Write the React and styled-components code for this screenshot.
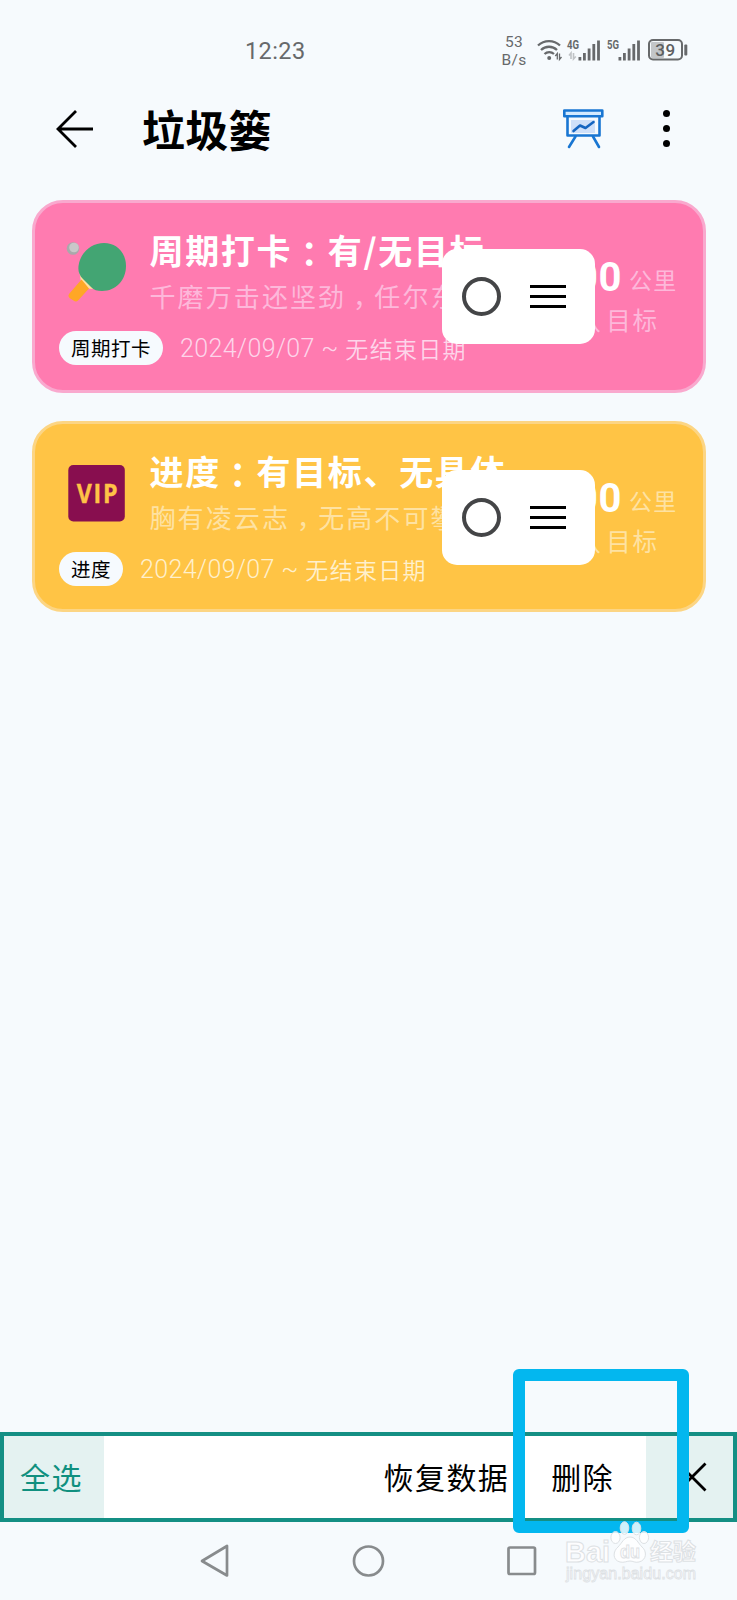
import styled, { createGlobalStyle } from "styled-components";

const GlobalStyle = createGlobalStyle`
  * {
    box-sizing: border-box;
  }

  body {
    margin: 0;
    background-color: #f6fafd;
    font-family: Roboto, "Noto Sans CJK SC", sans-serif;
  }

  svg {
    display: block;
    flex-shrink: 0;
    overflow: visible;
  }
`;

const Screen = styled.div`
  display: flex;
  flex-direction: column;
  height: 1600px;
  overflow: hidden;
  position: relative;
  width: 737px;
`;

const StatusBar = styled.div`
  align-items: center;
  color: #67696b;
  display: flex;
  height: 100px;
  padding: 0 49px 0 245px;
`;

const Clock = styled.span`
  font-size: 23.5px;
  letter-spacing: 0.4px;
  padding-top: 1px;
`;

const NetSpeed = styled.div`
  font-size: 15.5px;
  letter-spacing: 0.3px;
  line-height: 18px;
  margin: 0 10px 0 auto;
  padding-top: 2px;
  text-align: center;
`;

const StatusIcons = styled.div`
  align-items: center;
  display: flex;
  gap: 4.5px;

  > :last-child {
    margin-left: 2px;
  }
`;

const Header = styled.header`
  align-items: center;
  display: flex;
  height: 56px;
  padding: 1px 67px 0 56px;

  h1 {
    font-family: "Noto Sans CJK SC", sans-serif;
    font-size: 43px;
    font-weight: 700;
    letter-spacing: 0.3px;
    line-height: 55px;
    margin: 0 auto 1px 48px;
  }
`;

const MoreButton = styled.div`
  display: grid;
  gap: 8px;
  margin-left: 59px;

  i {
    background-color: #000;
    border-radius: 50%;
    height: 7px;
    width: 7px;
  }
`;

const CardList = styled.main`
  display: flex;
  flex: 1;
  flex-direction: column;
  gap: 28px;
  padding: 44px 31.5px 0;
`;

const Card = styled.article`
  background-color: ${({ $color }) => $color};
  border: 3px solid ${({ $border }) => $border};
  border-radius: 31px;
  color: #fff;
  height: ${({ $height }) => $height}px;
  padding: 24px 25px 0 24px;
  position: relative;
`;

const CardTop = styled.div`
  display: flex;
  height: 94px;
`;

const CardIcon = styled.div`
  margin: 14px 23px 0 8px;
`;

const CardText = styled.div`
  font-family: "Noto Sans CJK SC", sans-serif;
  white-space: nowrap;
  width: 360px;

  h2 {
    font-size: 34px;
    font-weight: 700;
    letter-spacing: 1.67px;
    line-height: 46px;
    margin: 0;
  }

  p {
    color: ${({ $muted }) => $muted};
    font-size: 26px;
    font-weight: 400;
    letter-spacing: 2.1px;
    line-height: 46px;
    margin: 0;
  }
`;

// the TC face centres punctuation in its cell, $drop lowers it to the line
const Punct = styled.span`
  display: inline-block;
  font-family: "Noto Sans CJK TC", sans-serif;
  line-height: 1;
  margin: -10px 0;
  transform: translateY(${({ $drop }) => $drop}em);
`;

const Stats = styled.div`
  align-items: flex-end;
  color: ${({ $muted }) => $muted};
  display: flex;
  flex-direction: column;
  margin-left: auto;
  white-space: nowrap;
`;

const Amount = styled.div`
  font-size: 23px;
  letter-spacing: 1.3px;
  line-height: 44px;
  margin-top: 31px;

  strong {
    color: #fff;
    font-size: 40px;
    font-weight: 700;
    letter-spacing: 0.5px;
    line-height: 40px;
    margin-right: 7px;
    vertical-align: -2px;
  }
`;

const Target = styled.div`
  font-size: 24.5px;
  letter-spacing: 1.6px;
  line-height: 36px;
  margin-right: 19px;

  span {
    margin-right: 4px;
  }
`;

const CardFooter = styled.div`
  align-items: center;
  display: flex;
  gap: 17px;
  height: 34px;
  margin-top: 10px;
`;

const Tag = styled.span`
  background-color: #f6fafe;
  border-radius: 17px;
  color: #000;
  font-family: "Noto Sans CJK SC", sans-serif;
  font-size: 19.5px;
  height: 34px;
  letter-spacing: 0.5px;
  line-height: 34px;
  padding: 0 12px 0 12.5px;
`;

const DateRange = styled.span`
  color: ${({ $color }) => $color};
  font-size: 23px;
  font-weight: 350;
  letter-spacing: 1.3px;
  line-height: 34px;
  padding-top: 3px;
  white-space: nowrap;

  span {
    font-size: 25px;
    font-weight: 300;
    letter-spacing: 0.4px;
    vertical-align: 1px;
  }
`;

const SelectPanel = styled.div`
  align-items: center;
  background-color: #fff;
  border-radius: 15px;
  display: flex;
  gap: 29px;
  height: 95px;
  left: 407.5px;
  padding-left: 20px;
  position: absolute;
  top: 46px;
  width: 153px;
`;

const Radio = styled.span`
  border: 4px solid #444547;
  border-radius: 50%;
  height: 39px;
  width: 39px;
`;

const DragHandle = styled.span`
  display: grid;
  gap: 7.4px;

  i {
    background-color: #000;
    height: 2.8px;
    width: 36px;
  }
`;

const ActionBar = styled.footer`
  align-items: stretch;
  background-color: #fff;
  border: 4px solid #148f84;
  display: flex;
  font-family: "Noto Sans CJK SC", sans-serif;
  font-size: 30px;
  height: 90px;
  letter-spacing: 1.4px;
  line-height: 80px;
  white-space: nowrap;
`;

const SelectAll = styled.div`
  background-color: #e4f2f1;
  color: #10907f;
  margin-right: auto;
  padding-left: 16px;
  width: 100px;
`;

const Action = styled.div`
  padding-right: ${({ $gap }) => $gap}px;
`;

const CloseButton = styled.div`
  align-items: center;
  background-color: #e4f2f1;
  display: flex;
  justify-content: center;
  padding-left: 4px;
  width: 87px;
`;

const SystemNav = styled.nav`
  align-items: center;
  display: flex;
  height: 78px;
  justify-content: space-between;
  padding: 0 200px;
`;

const Highlight = styled.div`
  border: 12px solid #03b7ef;
  border-radius: 6px;
  height: 164px;
  left: 513px;
  position: absolute;
  top: 1369px;
  width: 176px;
`;

const Watermark = styled.div`
  left: 564px;
  position: absolute;
  top: 1519px;
`;

const BackIcon = () => (
  <svg width="38" height="38" viewBox="0 0 38 38" fill="none" stroke="#000" strokeWidth="2.8">
    <path d="M20 1 2 19l18 18M2 19h35" />
  </svg>
);

const BoardIcon = () => (
  <svg width="41" height="39" viewBox="0 0 41 39" fill="none" stroke="#1976d2" strokeWidth="2.6" strokeLinecap="round" strokeLinejoin="round">
    <path d="M8 11h24v13H8z" fill="#cfe0f9" stroke="none" />
    <path d="M4.500 8v18.500h32V8" />
    <rect x="1.300" y="1.500" width="38" height="5.800" fill="#d3eaff" />
    <path d="m10.500 22 6.500-5.500 5.500 2.500 8-6" stroke="#1565c0" />
    <path d="M12.500 27.500 6 38M30 27.500l6 10.500" />
  </svg>
);

const WifiIcon = () => (
  <svg width="26" height="22" viewBox="0 0 26 22" fill="none" stroke="#67696b" strokeWidth="2.300">
    <path d="M1 6.500a16 16 0 0 1 22 0M4 11a11.500 11.500 0 0 1 16 0M7.500 15a7 7 0 0 1 9.500 0" />
    <circle cx="12.200" cy="19" r="2" fill="#67696b" stroke="none" />
    <path d="M20.300 20.500v-6l-2 2.500M22.500 14.500v6l2-2.500" strokeWidth="1.300" />
  </svg>
);

const Signal = ({ label, data }) => (
  <svg width="35" height="23" viewBox="0 0 35 23" fill="#67696b">
    <text x="0" y="10" fontSize="12.500" fontWeight="700" fontFamily="Roboto" textLength="12" lengthAdjust="spacingAndGlyphs">
      {label}
    </text>
    {data && <path d="M4 20v-6l-2 2.500M6.500 14v6l2.300-2.500" fill="none" stroke="#c0c3c6" strokeWidth="1.600" />}
    <path d="M11.500 18h2.800v3.500h-2.800zM16 14h2.800v7.500H16zM20.700 9.500h2.800v12h-2.800zM25.400 5h2.800v16.500h-2.800zM30.100 1.500h2.800v20h-2.800z" />
  </svg>
);

const BatteryIcon = () => (
  <svg width="40" height="22" viewBox="0 0 40 22">
    <rect x="3" y="3" width="13" height="16" rx="1" fill="#c3c6c9" />
    <rect x="1" y="1" width="33" height="19.500" rx="4" fill="none" stroke="#67696b" strokeWidth="2" />
    <rect x="36.300" y="5.500" width="3" height="11" rx="1" fill="#67696b" />
    <text x="17.500" y="16.800" textAnchor="middle" fontSize="17" fontWeight="500" letterSpacing="0.500" fontFamily="Roboto" fill="#5d5f61">
      39
    </text>
  </svg>
);

const PaddleIcon = () => (
  <svg width="60" height="62" viewBox="0 0 60 62">
    <circle cx="6" cy="7.500" r="6.300" fill="#a9a9ab" />
    <circle cx="7" cy="6.500" r="4.800" fill="#c9c8c9" />
    <path d="M12.500 32 28 48l-7.500-.500L14 40z" fill="#ffe0a0" />
    <path d="M2 53 14.500 38.500 22 47.500 11 59.500q-2 2-4.500 0L2.500 57q-2-2-.500-4z" fill="#ffa726" />
    <path d="M11.500 25C13 12 24 2 37 2s22 10 22 23c0 14-10 25-24 25-5 0-8-1-11-4l-8-8c-4-4-5-8-4.500-13z" fill="#43a573" />
  </svg>
);

const VipIcon = () => (
  <svg width="60" height="62" viewBox="0 0 60 62">
    <rect x="1.300" y="3" width="56.500" height="56.500" rx="5" fill="#880e4f" />
    <text transform="translate(31 41) scale(0.86 1)" textAnchor="middle" fontSize="27" fontWeight="700" letterSpacing="2" fontFamily="Open Sans, sans-serif" fill="#ffc247" stroke="#ffc247" strokeWidth="0.400">
      VIP
    </text>
  </svg>
);

const WatermarkLogo = () => (
  <svg width="136" height="70" viewBox="0 0 136 70" fill="#fff" fillOpacity="0.8" stroke="#dde1e4" strokeWidth="1">
    <ellipse cx="60.500" cy="9" rx="4.300" ry="6.300" />
    <ellipse cx="72.500" cy="9.500" rx="4.300" ry="6.300" />
    <ellipse cx="51.500" cy="18.500" rx="4.600" ry="6" />
    <ellipse cx="80" cy="18.500" rx="4.600" ry="6" />
    <path d="M66 18c6 0 8 6 12 10 5 4 5 13-3 15-4 1-6-1-9-1s-6 2-10 1c-8-2-7-11-2-15 4-4 6-10 12-10z" />
    <g fontFamily="Liberation Sans, Noto Sans CJK SC, sans-serif" fontWeight="700">
      <text x="1" y="43" fontSize="29" textLength="45" lengthAdjust="spacingAndGlyphs">Bai</text>
      <text x="56" y="39" fontSize="19" textLength="20" lengthAdjust="spacingAndGlyphs">du</text>
      <text x="86" y="41" fontSize="23" textLength="46">经验</text>
    </g>
    <text x="2" y="60" fontSize="16" fontFamily="Liberation Sans, sans-serif" textLength="130" strokeWidth="0.800">
      jingyan.baidu.com
    </text>
  </svg>
);

const cards = [
  {
    id: 1,
    color: "#ff7bb0",
    border: "#f9a9ce",
    muted: "#fdb8da",
    date: "#fdd5ea",
    height: 193,
    icon: <PaddleIcon />,
    title: ["周期打卡", "有/无目标"],
    note: ["千磨万击还坚劲", "任尔东西"],
    tag: "周期打卡",
  },
  {
    id: 2,
    color: "#ffc445",
    border: "#fcd584",
    muted: "#fee2a2",
    date: "#fff0cc",
    height: 191,
    icon: <VipIcon />,
    title: ["进度", "有目标、无具体"],
    note: ["胸有凌云志", "无高不可攀"],
    tag: "进度",
  },
];

const TrashCard = ({ card }) => (
  <Card $color={card.color} $border={card.border} $height={card.height}>
    <CardTop>
      <CardIcon>{card.icon}</CardIcon>
      <CardText $muted={card.muted}>
        <h2>
          {card.title[0]}
          <Punct $drop={0.08}>：</Punct>
          {card.title[1]}
        </h2>
        <p>
          {card.note[0]}
          <Punct $drop={0.32}>，</Punct>
          {card.note[1]}
        </p>
      </CardText>
      <Stats $muted={card.muted}>
        <Amount>
          <strong>0.00</strong>公里
        </Amount>
        <Target>
          <span>默认</span>目标
        </Target>
      </Stats>
    </CardTop>
    <CardFooter>
      <Tag>{card.tag}</Tag>
      <DateRange $color={card.date}>
        <span>2024/09/07 ~ </span>无结束日期
      </DateRange>
    </CardFooter>
    <SelectPanel>
      <Radio />
      <DragHandle>
        <i />
        <i />
        <i />
      </DragHandle>
    </SelectPanel>
  </Card>
);

const App = () => {
  return (
    <Screen>
      <GlobalStyle />
      <StatusBar>
        <Clock>12:23</Clock>
        <NetSpeed>
          53
          <br />
          B/s
        </NetSpeed>
        <StatusIcons>
          <WifiIcon />
          <Signal label="4G" data />
          <Signal label="5G" />
          <BatteryIcon />
        </StatusIcons>
      </StatusBar>

      <Header>
        <BackIcon />
        <h1>垃圾篓</h1>
        <BoardIcon />
        <MoreButton>
          <i />
          <i />
          <i />
        </MoreButton>
      </Header>

      <CardList>
        {cards.map((card) => (
          <TrashCard key={card.id} card={card} />
        ))}
      </CardList>

      <ActionBar>
        <SelectAll>全选</SelectAll>
        <Action $gap={42}>恢复数据</Action>
        <Action $gap={32}>删除</Action>
        <CloseButton>
          <svg width="30" height="30" viewBox="0 0 30 30" stroke="#000" strokeWidth="2.800">
            <path d="m1.500 1.500 27 27M28.500 1.500l-27 27" />
          </svg>
        </CloseButton>
      </ActionBar>

      <SystemNav>
        <svg width="30" height="34" viewBox="0 0 30 34" fill="none" stroke="#888b8d" strokeWidth="2.700" strokeLinejoin="round">
          <path d="M27 2v29.500L2 17z" />
        </svg>
        <svg width="34" height="34" viewBox="0 0 34 34" fill="none" stroke="#888b8d" strokeWidth="2.700">
          <circle cx="16.500" cy="17" r="14.500" />
        </svg>
        <svg width="30" height="30" viewBox="0 0 30 30" fill="none" stroke="#888b8d" strokeWidth="2.700">
          <rect x="1.500" y="1.500" width="26.500" height="26.500" rx="1.500" />
        </svg>
      </SystemNav>

      <Highlight />
      <Watermark>
        <WatermarkLogo />
      </Watermark>
    </Screen>
  );
};

export default App;
